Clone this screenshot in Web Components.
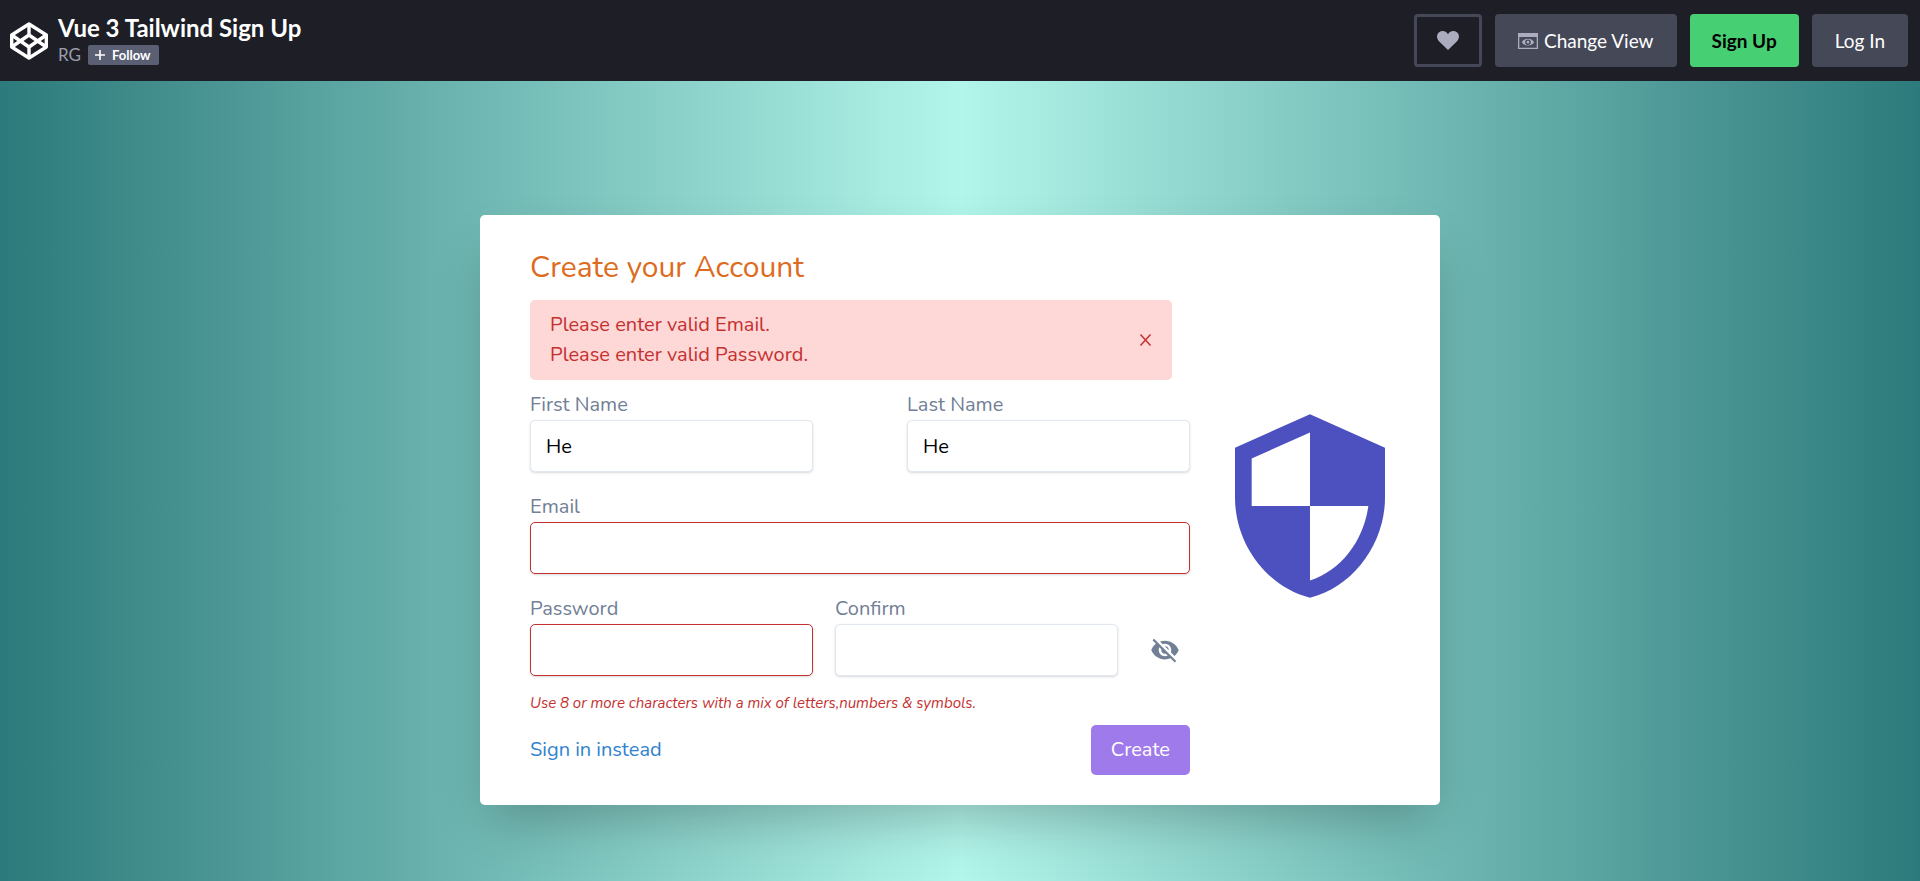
<!DOCTYPE html>
<html lang="en">
<head>
<meta charset="utf-8">
<title>Vue 3 Tailwind Sign Up</title>
<style>
  html, body { margin: 0; min-height: 100%; }
  body { display: flex; flex-direction: column; min-height: 100vh; font-family: Lato, "Liberation Sans", sans-serif; }
</style>
</head>
<body>
<pen-header>
  <span slot="title">Vue 3 Tailwind Sign Up</span>
  <span slot="author">RG</span>
</pen-header>
<sign-up-page></sign-up-page>

<script>
class ShadowElement extends HTMLElement {
  constructor() {
    super();
    this.attachShadow({ mode: 'open' }).innerHTML =
      '<style>*{box-sizing:border-box}:host{box-sizing:border-box}:host([hidden]){display:none!important}</style>' + this.render();
  }
}

customElements.define('pen-button', class extends ShadowElement {
  render() {
    return `<style>
      :host { display: block; }
      button { display: flex; align-items: center; justify-content: center; gap: 6px; height: 53px; padding: 0 23px;
        border: 0; border-radius: 4px; background: #444857; color: #fff; font: 400 19px/24px Lato, "Liberation Sans", sans-serif;
        white-space: nowrap; cursor: pointer; }
      :host([kind="primary"]) button { background: #47cf73; color: #000; font-weight: 700; padding: 0 22px; }
      :host([kind="outline"]) button { background: transparent; border: 3px solid #444857; padding: 0 20px; }
      ::slotted(svg) { display: block; fill: #abadbf; }
    </style><button type="button"><slot></slot></button>`;
  }
});

customElements.define('pen-header', class extends ShadowElement {
  render() {
    return `<style>
      :host { display: flex; align-items: center; justify-content: space-between; height: 81px; padding: 0 12px 0 10px; background: #1e1f26; color: #fff; }
      .left { display: flex; align-items: center; gap: 10px; }
      .logo { display: block; }
      .titles { padding-bottom: 2px; }
      h1 { margin: 0; font-size: 24px; line-height: 30px; font-weight: 700; }
      .by { display: flex; align-items: center; gap: 7px; height: 24px; color: #9b9dad; font-size: 17px; line-height: 20px; }
      .follow { display: flex; align-items: center; gap: 7px; height: 20px; padding: 0 9px 0 7px; border: 0; border-radius: 2px;
        background: #5a5f73; color: #fff; font: 700 13px/20px Lato, "Liberation Sans", sans-serif; cursor: pointer; }
      nav { display: flex; gap: 13px; }
    </style>
    <div class="left">
      <svg class="logo" width="38" height="38" viewBox="0 0 38 38" fill="none" stroke="#fff" stroke-width="3.4" stroke-linejoin="round">
        <path d="M19 2 36.3 13v12L19 36 1.7 25V13Z"/>
        <path d="M1.7 13 19 25 36.3 13M1.7 25 19 13 36.3 25M19 2v11M19 25v11"/>
      </svg>
      <div class="titles">
        <h1><slot name="title"></slot></h1>
        <div class="by"><slot name="author"></slot>
          <button class="follow" type="button">
            <svg width="10" height="10" viewBox="0 0 10 10" fill="none" stroke="#fff" stroke-width="1.6"><path d="M5 0v10M0 5h10"/></svg>Follow
          </button>
        </div>
      </div>
    </div>
    <nav>
      <pen-button kind="outline"><svg width="22" height="19" viewBox="0 0 22 19" aria-label="Like"><path d="M11 19 2.2 10.4C-.6 7.6-.6 3.800 1.6 1.700 4.200-.7 8.700-.6 11 3.200 13.300-.6 17.800-.7 20.400 1.700c2.200 2.100 2.200 5.900-.6 8.700Z"/></svg></pen-button>
      <pen-button><svg width="20" height="16" viewBox="0 0 20 16"><path fill-rule="evenodd" d="M0 0h20v16H0ZM1.300 4v10.700h17.400V4Z"/><path fill-rule="evenodd" d="M3.800 9.200C6.500 4.700 13.500 4.700 16.200 9.200 13.500 13.600 6.500 13.600 3.800 9.200ZM10 6.400a2.800 2.800 0 1 0 0 5.600 2.800 2.800 0 0 0 0-5.600Zm0 1.400a1.400 1.400 0 1 1 0 2.800 1.400 1.400 0 0 1 0-2.800Z"/></svg>Change View</pen-button>
      <pen-button kind="primary">Sign Up</pen-button>
      <pen-button>Log In</pen-button>
    </nav>`;
  }
});

customElements.define('form-field', class extends ShadowElement {
  static observedAttributes = ['label', 'type', 'value'];
  render() {
    return `<style>
      :host { display: block; }
      label { display: block; color: #718096; font-size: 20px; line-height: 30px; }
      input { display: block; width: 100%; height: 52px; margin: 0; padding: 10px 15px; border: 1px solid #e2e8f0; border-radius: 5px;
        background: #fff; color: #000; font: inherit; font-size: 20px; line-height: 30px; outline: 0;
        box-shadow: 0 1px 3px rgba(0,0,0,.1), 0 1px 2px rgba(0,0,0,.06); }
      :host([invalid]) input { border-color: #c53030; }
    </style><label for="field"></label><input id="field">`;
  }
  attributeChangedCallback(name, _, value) {
    if (name === 'label') this.shadowRoot.querySelector('label').textContent = value;
    else this.shadowRoot.querySelector('input')[name] = value;
  }
});

customElements.define('error-alert', class extends ShadowElement {
  render() {
    return `<style>
      :host { display: flex; align-items: center; justify-content: space-between; padding: 10px 20px; border-radius: 5px;
        background: #fed7d7; color: #c53030; font-size: 20px; line-height: 30px; }
      button { display: block; padding: 0; border: 0; background: none; color: inherit; cursor: pointer; }
      svg { display: block; }
    </style><div><slot></slot></div>
    <button type="button" aria-label="Dismiss"><svg width="13" height="12" viewBox="0 0 13 12" fill="none" stroke="currentColor" stroke-width="1.500"><path d="M1.500.5l10 11M11.500.5l-10 11"/></svg></button>`;
  }
  connectedCallback() {
    this.shadowRoot.querySelector('button').addEventListener('click', () => { this.hidden = true; });
  }
});

customElements.define('sign-up-card', class extends ShadowElement {
  render() {
    return `<style>
      :host { display: flex; align-items: center; gap: 20px; width: 50%; min-width: 960px; padding: 30px 30px 30px 50px; border-radius: 5px; background: #fff;
        box-shadow: 0 25px 50px -12px rgba(0,0,0,.25);
        font-family: Nunito, "Liberation Sans", sans-serif; font-size: 20px; line-height: 30px; }
      form { flex: 1; margin: 0; }
      h2 { margin: 0 0 10px; color: #dd6b20; font-size: 30px; line-height: 45px; font-weight: 400; }
      error-alert { margin: 0 18px 10px 0; }
      .row { display: flex; justify-content: space-between; align-items: flex-end; margin-bottom: 20px; }
      .row form-field { width: 283px; }
      .row form-field.wide { width: 100%; }
      .row.password { margin-bottom: 15px; }
      .toggle { display: flex; align-items: center; height: 52px; padding: 0 10px; border: 0; background: none; cursor: pointer; }
      .hint { margin: 0 0 10px; color: #c53030; font-size: 15px; line-height: 24px; font-style: italic; }
      .actions { display: flex; justify-content: space-between; align-items: center; }
      a { color: #3182ce; text-decoration: none; }
      .create { height: 50px; padding: 0 20px; border: 0; border-radius: 5px; background: #9f7aea; color: #fff; font: inherit; cursor: pointer; }
      .shield { flex: none; width: 200px; height: 200px; margin-bottom: 8px; fill: #4c51bf; }
    </style>
    <form>
      <h2>Create your Account</h2>
      <error-alert><div>Please enter valid Email.</div><div>Please enter valid Password.</div></error-alert>
      <div class="row">
        <form-field label="First Name" type="text" value="He"></form-field>
        <form-field label="Last Name" type="text" value="He"></form-field>
      </div>
      <div class="row"><form-field class="wide" label="Email" type="email" invalid></form-field></div>
      <div class="row password">
        <form-field label="Password" type="password" invalid></form-field>
        <form-field label="Confirm" type="password"></form-field>
        <button class="toggle" type="button" aria-label="Show password">
          <svg width="30" height="30" viewBox="0 0 24 24" fill="#718096"><path d="M12 7c2.760 0 5 2.240 5 5 0 .65-.13 1.260-.36 1.830l2.920 2.920c1.510-1.260 2.700-2.890 3.430-4.750-1.730-4.390-6-7.500-11-7.500-1.400 0-2.740.25-3.980.7l2.160 2.160C10.740 7.130 11.350 7 12 7zM2 4.270l2.280 2.280.46.46C3.080 8.300 1.780 10.020 1 12c1.730 4.390 6 7.500 11 7.500 1.550 0 3.030-.3 4.380-.84l.42.42L19.730 22 21 20.730 3.270 3 2 4.270zM7.530 9.800l1.550 1.550c-.05.21-.08.43-.08.65 0 1.660 1.340 3 3 3 .22 0 .44-.03.65-.08l1.550 1.550c-.67.33-1.410.53-2.200.53-2.760 0-5-2.240-5-5 0-.79.2-1.530.53-2.200zm4.310-.78l3.150 3.150.02-.16c0-1.660-1.340-3-3-3l-.17.01z"/></svg>
        </button>
      </div>
      <p class="hint">Use 8 or more characters with a mix of letters,numbers &amp; symbols.</p>
      <div class="actions"><a href="#signin">Sign in instead</a><button class="create" type="button">Create</button></div>
    </form>
    <svg class="shield" viewBox="0 0 24 24" aria-hidden="true"><path d="M12 1 3 5v6c0 5.550 3.840 10.740 9 12 5.160-1.260 9-6.450 9-12V5l-9-4zm0 10.990h7c-.53 4.120-3.280 7.790-7 8.940V12H5V6.300l7-3.110v8.800z"/></svg>`;
  }
});

customElements.define('sign-up-page', class extends ShadowElement {
  render() {
    return `<style>
      :host { flex: 1; display: flex; align-items: flex-start; justify-content: center; padding: 134px 0 60px;
        background: linear-gradient(90deg, #2c7a7b, #b2f5ea, #2c7a7b); }
    </style><sign-up-card></sign-up-card>`;
  }
});
</script>
</body>
</html>
